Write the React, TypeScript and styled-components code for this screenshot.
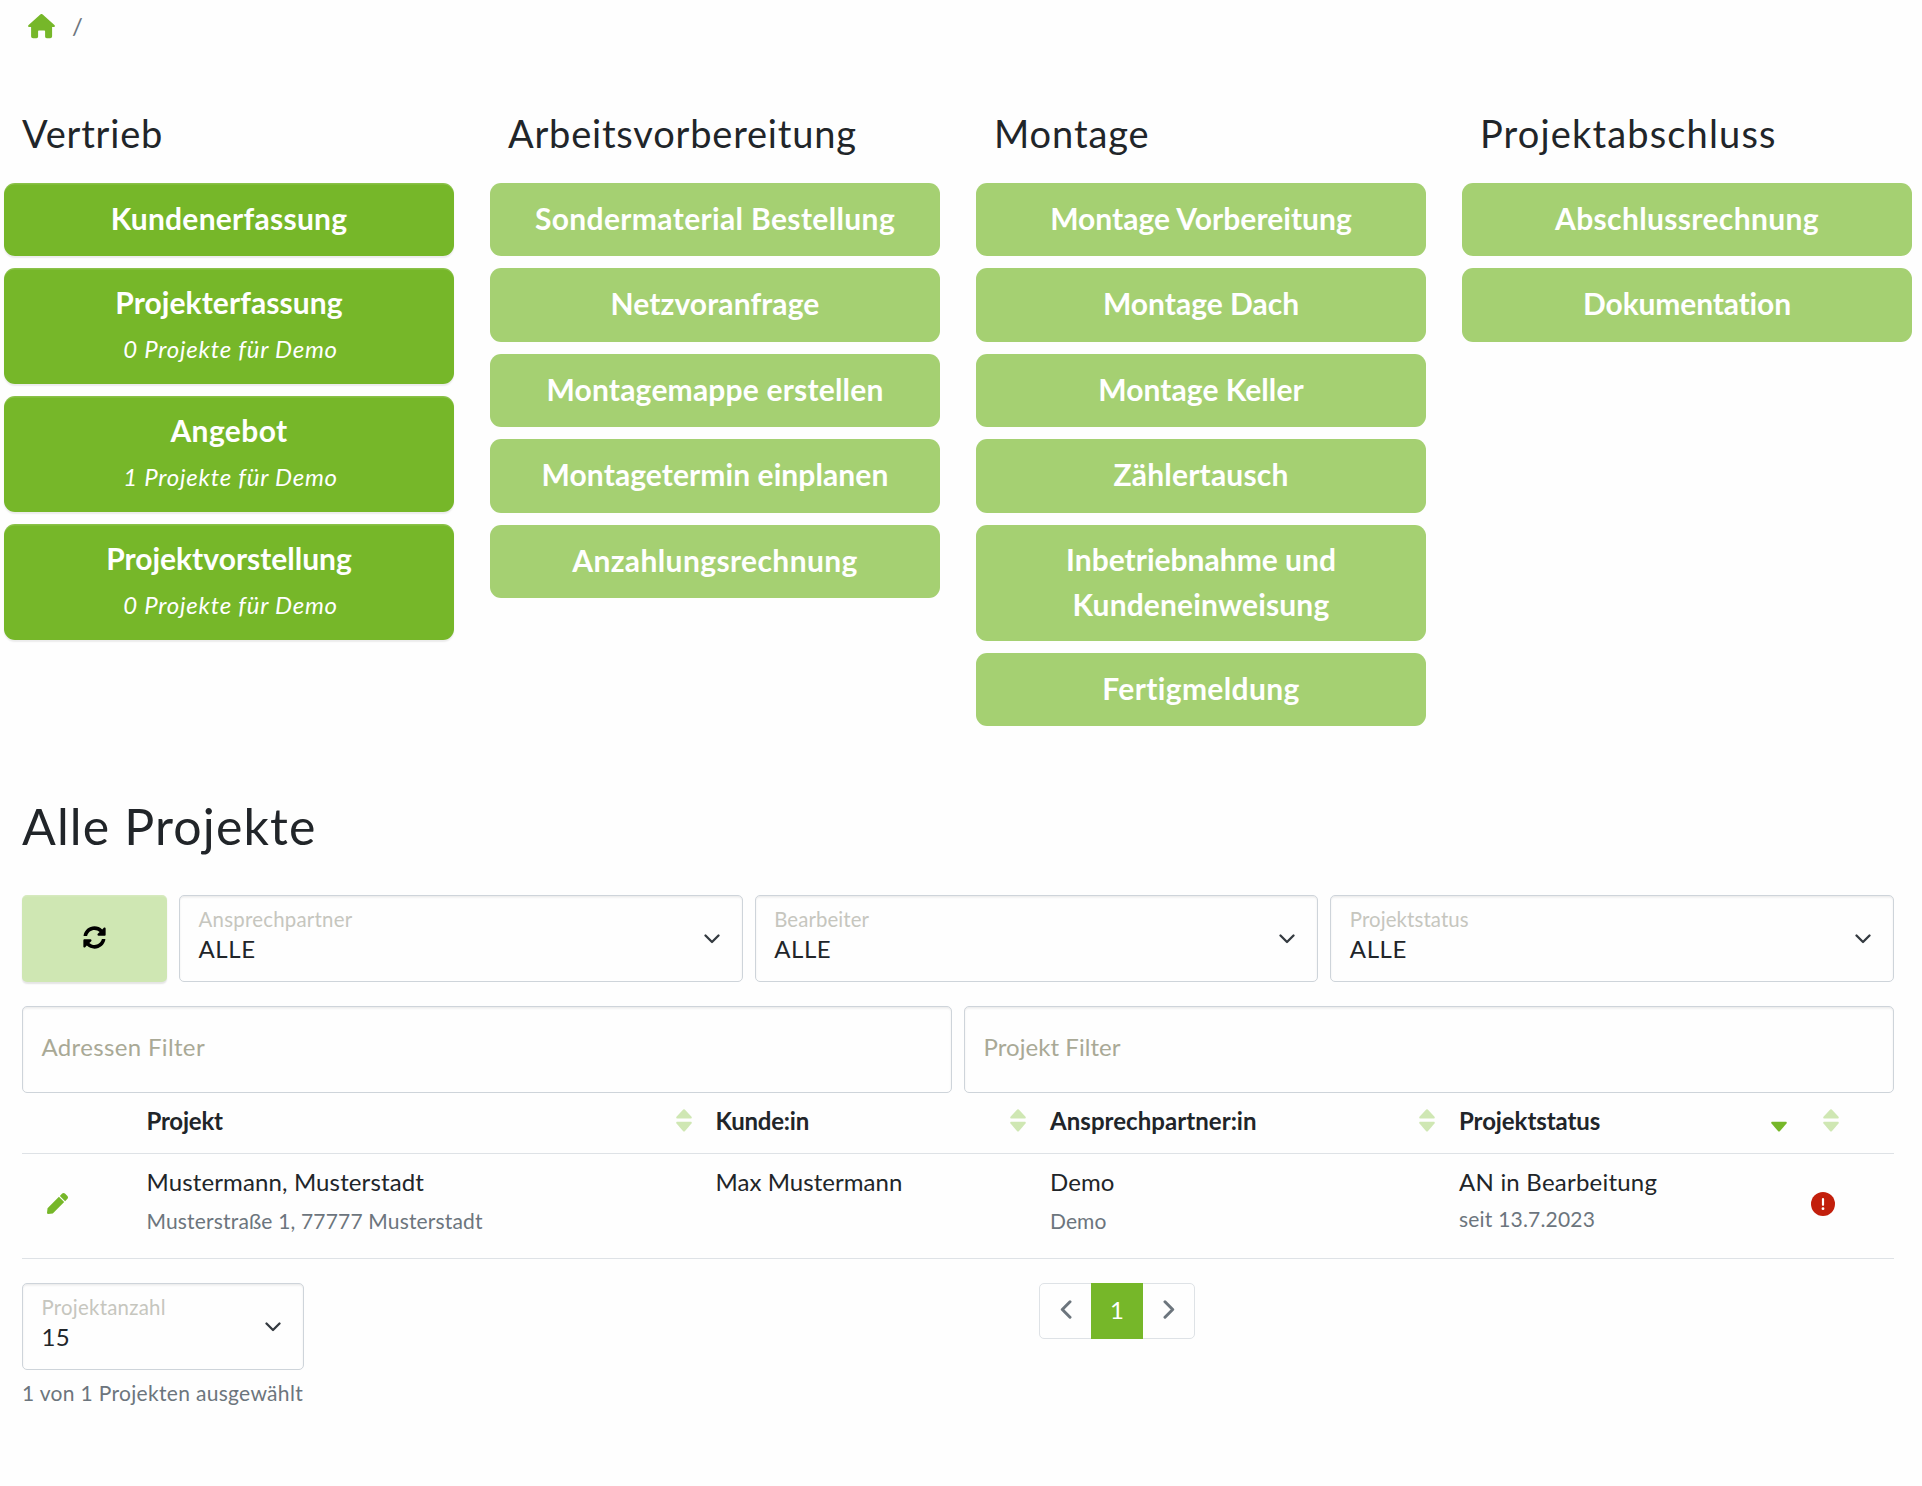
import React from 'react';
import styled, { createGlobalStyle, css } from 'styled-components';
import { FaSyncAlt, FaPen } from 'react-icons/fa';

const green = '#76b729';
const paleGreen = '#cfe7b3';
const ink = '#212529';
const muted = '#6c757d';
const line = '#dee2e6';

const Base = createGlobalStyle`
  *, *::before, *::after { box-sizing: border-box; }
  body { margin: 0; background: #fefefe; color: ${ink}; font: 400 24px/30px Lato, "Open Sans", sans-serif; }
  button { font: inherit; }
`;

const Page = styled.main`
  width: 1922px;
  height: 1486px;
  overflow: hidden;
  display: flex;
  flex-direction: column;
`;

const Spaced = styled.span<{ ls?: number }>`
  letter-spacing: ${(p) => p.ls ?? 0.25}px;
  white-space: nowrap;
`;

/* Breadcrumb */
const Breadcrumb = styled.nav`
  display: flex;
  align-items: center;
  gap: 17px;
  height: 52px;
  padding: 0 0 0 28px;
  color: ${muted};
  svg { display: block; color: ${green}; }
`;

/* Workflow columns */
const Workflow = styled.section`
  display: grid;
  grid-template-columns: repeat(4, 486px);
  height: 674px;
  padding: 58px 0 0 4px;
`;
const Stage = styled.div`
  display: flex;
  flex-direction: column;
  gap: 12.2px;
  width: 450px;
`;
const StageTitle = styled.h3`
  margin: 0 0 14.8px;
  padding-left: 18px;
  font-size: 38px;
  font-weight: 400;
  line-height: 46px;
`;
const Step = styled.button<{ $active?: boolean; $tall?: boolean }>`
  display: flex;
  flex-direction: column;
  align-items: center;
  width: 100%;
  height: ${(p) => (p.$tall ? 115.8 : 73.3)}px;
  padding: ${(p) => (p.$tall ? 11.6 : 12.7)}px 60px 0;
  border: 0;
  border-radius: 11px;
  background: ${(p) => (p.$active ? green : '#a5d072')};
  color: #fff;
  font-size: 30px;
  font-weight: 700;
  line-height: 45px;
  ${(p) =>
    p.$active &&
    css`
      box-shadow: inset 0 1.5px 0 rgba(255, 255, 255, 0.15), 0 1.5px 1.5px rgba(0, 0, 0, 0.075);
    `}
`;
const StepNote = styled.em`
  margin-top: 9.4px;
  padding-left: 3px;
  font-size: 24px;
  font-weight: 400;
  line-height: 30px;
  letter-spacing: 0.76px;
`;

/* Project list */
const Projects = styled.section`
  display: flex;
  flex-direction: column;
  padding: 69.5px 28px 0 22px;
`;
const ProjectsTitle = styled.h1`
  margin: 0 0 39.5px;
  font-size: 50px;
  font-weight: 400;
  line-height: 60px;
`;
const Filters = styled.div<{ cols: string }>`
  display: grid;
  grid-template-columns: ${(p) => p.cols};
  gap: 12px;
  margin-bottom: 24.5px;
  &:nth-of-type(2) { margin-bottom: 0.5px; }
`;
const Refresh = styled.button`
  display: grid;
  place-items: center;
  height: 86.5px;
  padding: 0 0 2px;
  border: 0;
  border-radius: 5px;
  background: ${paleGreen};
  color: #000;
  box-shadow: inset 0 1.5px 0 rgba(255, 255, 255, 0.15), 0 1.5px 1.5px rgba(0, 0, 0, 0.1);
`;
const Field = styled.div`
  display: flex;
  align-items: center;
  justify-content: space-between;
  height: 86.5px;
  padding: 0 22px 0 18.5px;
  border: 1px solid #ced4da;
  border-radius: 5px;
  box-shadow: inset 0 1.5px 2px rgba(0, 0, 0, 0.075);
  svg { display: block; margin-top: 1px; }
`;
const FieldText = styled.div`
  display: flex;
  flex-direction: column;
  gap: 2.5px;
  padding-bottom: 5.5px;
`;
const FieldLabel = styled.span`
  color: #c6c6be;
  font-size: 20.4px;
  line-height: 24px;
`;
const Placeholder = styled.span`
  color: #a9a996;
  padding-bottom: 4.5px;
`;

/* Table */
const rowGrid = css`
  display: grid;
  grid-template-columns: 112.5px 569px 334.5px 409px 352px 1fr;
  border-bottom: 1px solid ${line};
`;
const HeadRow = styled.div`
  ${rowGrid}
  height: 61px;
  font-weight: 700;
`;
const HeadCell = styled.div`
  display: flex;
  justify-content: space-between;
  padding: 13px 12px 0;
  svg { display: block; margin-top: 3px; }
`;
const IconHeadCell = styled(HeadCell)`
  padding-left: 24px;
`;
const BodyRow = styled.div`
  ${rowGrid}
  height: 105px;
`;
const Cell = styled.div<{ gap?: number }>`
  display: flex;
  flex-direction: column;
  gap: ${(p) => p.gap ?? 11.2}px;
  padding: 13.2px 12px 0;
`;
const IconCell = styled.div<{ left: number; lift?: number }>`
  display: flex;
  align-items: center;
  padding: 0 0 ${(p) => p.lift ?? 4}px ${(p) => p.left}px;
`;
const Detail = styled.span`
  color: ${muted};
  font-size: 21px;
  line-height: 26px;
`;

/* Footer */
const Footer = styled.footer`
  display: grid;
  grid-template-columns: 1017px auto;
  align-items: start;
  padding-top: 24px;
`;
const PageSize = styled.div`
  display: flex;
  flex-direction: column;
  gap: 10.5px;
  width: 282px;
`;
const Pagination = styled.nav`
  display: grid;
  grid-template-columns: 51px 52px 51px;
  width: 156px;
  height: 56px;
  border: 1px solid ${line};
  border-radius: 5px;
  color: ${muted};
`;
const PageItem = styled.span<{ $current?: boolean }>`
  display: grid;
  place-items: center;
  height: 54px;
  padding-bottom: 3px;
  ${(p) =>
    p.$current &&
    css`
      height: 56px;
      margin-top: -1px;
      background: ${green};
      color: #fff;
    `}
`;

const HomeIcon = () => (
  <svg width="27" height="25" viewBox="0 0 27 25">
    <path
      fill="currentColor"
      d="M12.3.5a1.8 1.8 0 0 1 2.4 0L26.4 10.9c.9.9.5 2.2-.7 2.2h-1.600v9.200c0 1.200-.8 2-2 2h-3.300c-1 0-1.700-.7-1.700-1.700v-5.200c0-.6-.4-1-1-1h-5c-.6 0-1 .4-1 1v5.200c0 1-.7 1.700-1.700 1.700H5.100c-1.200 0-2-.8-2-2v-9.200H1.300c-1.200 0-1.600-1.300-.7-2.200z"
    />
  </svg>
);
const Caret = () => (
  <svg width="16" height="10" viewBox="0 0 16 10">
    <path d="M1.500 1.500 8 8 14.500 1.500" fill="none" stroke="#343a40" strokeWidth="2.300" strokeLinecap="round" strokeLinejoin="round" />
  </svg>
);
const SortIcon = ({ active }: { active?: boolean }) => (
  <svg width="16" height="23" viewBox="0 0 16 23" fill={active ? green : paleGreen}>
    {!active && <path d="M7.200.6a1.200 1.200 0 0 1 1.600 0l6.700 7.200c.6.700.2 1.700-.8 1.700H1.300c-1 0-1.400-1-.8-1.700z" />}
    <path d="M7.200 22.200a1.200 1.200 0 0 0 1.600 0l6.700-7.700c.6-.7.200-1.700-.8-1.700H1.300c-1 0-1.400 1-.8 1.700z" />
  </svg>
);
const Arrow = ({ next }: { next?: boolean }) => (
  <svg width="12" height="19" viewBox="0 0 12 19">
    <path d={next ? 'M2 1.800 9.700 9.500 2 17.200' : 'M10 1.800 2.300 9.500 10 17.200'} fill="none" stroke="currentColor" strokeWidth="3" strokeLinecap="round" strokeLinejoin="round" />
  </svg>
);
const AlertIcon = () => (
  <svg width="24" height="24" viewBox="0 0 24 24">
    <circle cx="12" cy="12" r="12" fill="#c21f0c" />
    <path d="M12 7v5.800" stroke="#fff" strokeWidth="2.200" strokeLinecap="round" />
    <circle cx="12" cy="16.700" r="1.400" fill="#fff" />
  </svg>
);

type StepData = { lines: [string, number][]; note?: string };
const stages: { title: string; ls: number; active?: boolean; steps: StepData[] }[] = [
  {
    title: 'Vertrieb', ls: 0.8, active: true,
    steps: [
      { lines: [['Kundenerfassung', 0.26]] },
      { lines: [['Projekterfassung', 0.08]], note: '0 Projekte für Demo' },
      { lines: [['Angebot', 0.4]], note: '1 Projekte für Demo' },
      { lines: [['Projektvorstellung', 0]], note: '0 Projekte für Demo' },
    ],
  },
  {
    title: 'Arbeitsvorbereitung', ls: 0.8,
    steps: [
      { lines: [['Sondermaterial Bestellung', 0.36]] },
      { lines: [['Netzvoranfrage', 0.1]] },
      { lines: [['Montagemappe erstellen', 0.2]] },
      { lines: [['Montagetermin einplanen', 0.08]] },
      { lines: [['Anzahlungsrechnung', 0.38]] },
    ],
  },
  {
    title: 'Montage', ls: 0.9,
    steps: [
      { lines: [['Montage Vorbereitung', 0.03]] },
      { lines: [['Montage Dach', 0]] },
      { lines: [['Montage Keller', 0.05]] },
      { lines: [['Zählertausch', 0.2]] },
      { lines: [['Inbetriebnahme und', 0], ['Kundeneinweisung', 0.15]] },
      { lines: [['Fertigmeldung', 0.35]] },
    ],
  },
  {
    title: 'Projektabschluss', ls: 1.15,
    steps: [{ lines: [['Abschlussrechnung', 0.36]] }, { lines: [['Dokumentation', -0.15]] }],
  },
];

const Select = ({ label, value, ls = 0.1, valueLs = 0.6 }: { label: string; value: string; ls?: number; valueLs?: number }) => (
  <Field>
    <FieldText>
      <FieldLabel><Spaced ls={ls}>{label}</Spaced></FieldLabel>
      <Spaced ls={valueLs}>{value}</Spaced>
    </FieldText>
    <Caret />
  </Field>
);

export default function App() {
  return (
    <Page>
      <Base />
      <Breadcrumb>
        <HomeIcon />
        <span>/</span>
      </Breadcrumb>
      <Workflow>
        {stages.map((s) => (
          <Stage key={s.title}>
            <StageTitle><Spaced ls={s.ls}>{s.title}</Spaced></StageTitle>
            {s.steps.map((st) => (
              <Step key={st.lines[0][0]} $active={s.active} $tall={!!st.note || st.lines.length > 1}>
                {st.lines.map(([t, ls]) => <Spaced key={t} ls={ls}>{t}</Spaced>)}
                {st.note && <StepNote>{st.note}</StepNote>}
              </Step>
            ))}
          </Stage>
        ))}
      </Workflow>
      <Projects>
        <ProjectsTitle><Spaced ls={1.15}>Alle Projekte</Spaced></ProjectsTitle>
        <Filters cols="145px 1fr 1fr 1fr">
          <Refresh aria-label="Aktualisieren"><FaSyncAlt size={23} /></Refresh>
          <Select label="Ansprechpartner" value="ALLE" ls={0.25} />
          <Select label="Bearbeiter" value="ALLE" />
          <Select label="Projektstatus" value="ALLE" ls={0.1} />
        </Filters>
        <Filters cols="1fr 1fr">
          <Field><Placeholder><Spaced ls={0.35}>Adressen Filter</Spaced></Placeholder></Field>
          <Field><Placeholder><Spaced ls={0.05}>Projekt Filter</Spaced></Placeholder></Field>
        </Filters>
        <HeadRow>
          <HeadCell />
          <HeadCell><Spaced ls={-0.2}>Projekt</Spaced><SortIcon /></HeadCell>
          <HeadCell><Spaced ls={-0.2}>Kunde:in</Spaced><SortIcon /></HeadCell>
          <HeadCell><Spaced ls={0.05}>Ansprechpartner:in</Spaced><SortIcon /></HeadCell>
          <HeadCell><Spaced ls={-0.07}>Projektstatus</Spaced><SortIcon active /></HeadCell>
          <IconHeadCell><SortIcon /></IconHeadCell>
        </HeadRow>
        <BodyRow>
          <IconCell left={25} lift={6}><FaPen size={21} color={green} /></IconCell>
          <Cell>
            <Spaced ls={0.13}>Mustermann, Musterstadt</Spaced>
            <Detail><Spaced ls={0.17}>Musterstraße 1, 77777 Musterstadt</Spaced></Detail>
          </Cell>
          <Cell><Spaced ls={0.05}>Max Mustermann</Spaced></Cell>
          <Cell>
            <Spaced ls={0.1}>Demo</Spaced>
            <Detail><Spaced ls={0.1}>Demo</Spaced></Detail>
          </Cell>
          <Cell gap={9.2}>
            <Spaced ls={0.22}>AN in Bearbeitung</Spaced>
            <Detail><Spaced ls={0.2}>seit 13.7.2023</Spaced></Detail>
          </Cell>
          <IconCell left={12}><AlertIcon /></IconCell>
        </BodyRow>
        <Footer>
          <PageSize>
            <Select label="Projektanzahl" value="15" ls={0.25} valueLs={0.3} />
            <Detail><Spaced ls={0.32}>1 von 1 Projekten ausgewählt</Spaced></Detail>
          </PageSize>
          <Pagination>
            <PageItem><Arrow /></PageItem>
            <PageItem $current>1</PageItem>
            <PageItem><Arrow next /></PageItem>
          </Pagination>
        </Footer>
      </Projects>
    </Page>
  );
}
